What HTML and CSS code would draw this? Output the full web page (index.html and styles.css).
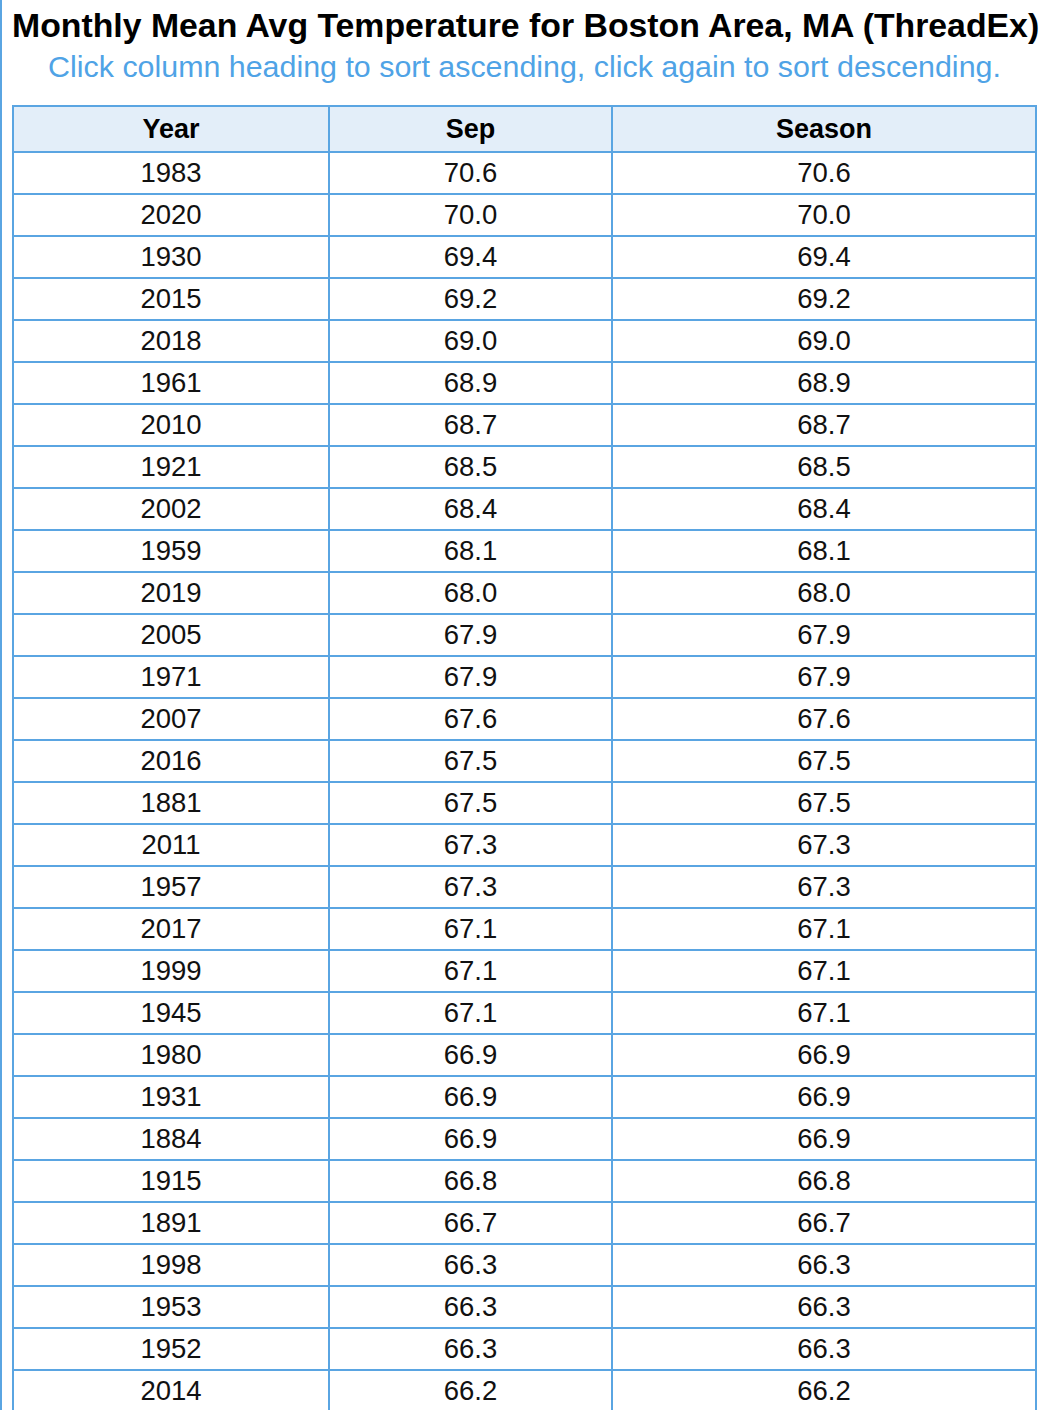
FILE: index.html
```html
<!DOCTYPE html>
<html lang="en">
<head>
<meta charset="utf-8">
<title>Monthly Mean Avg Temperature for Boston Area, MA (ThreadEx)</title>
<link rel="stylesheet" href="styles.css">
</head>
<body>
<div class="page">
  <h1 class="title">Monthly Mean Avg Temperature for Boston Area, MA (ThreadEx)</h1>
  <p class="hint">Click column heading to sort ascending, click again to sort descending.</p>
  <table class="data">
    <colgroup><col class="c1"><col class="c2"><col class="c3"></colgroup>
    <thead>
      <tr><th>Year</th><th>Sep</th><th>Season</th></tr>
    </thead>
    <tbody>
      <tr><td>1983</td><td>70.6</td><td>70.6</td></tr>
      <tr><td>2020</td><td>70.0</td><td>70.0</td></tr>
      <tr><td>1930</td><td>69.4</td><td>69.4</td></tr>
      <tr><td>2015</td><td>69.2</td><td>69.2</td></tr>
      <tr><td>2018</td><td>69.0</td><td>69.0</td></tr>
      <tr><td>1961</td><td>68.9</td><td>68.9</td></tr>
      <tr><td>2010</td><td>68.7</td><td>68.7</td></tr>
      <tr><td>1921</td><td>68.5</td><td>68.5</td></tr>
      <tr><td>2002</td><td>68.4</td><td>68.4</td></tr>
      <tr><td>1959</td><td>68.1</td><td>68.1</td></tr>
      <tr><td>2019</td><td>68.0</td><td>68.0</td></tr>
      <tr><td>2005</td><td>67.9</td><td>67.9</td></tr>
      <tr><td>1971</td><td>67.9</td><td>67.9</td></tr>
      <tr><td>2007</td><td>67.6</td><td>67.6</td></tr>
      <tr><td>2016</td><td>67.5</td><td>67.5</td></tr>
      <tr><td>1881</td><td>67.5</td><td>67.5</td></tr>
      <tr><td>2011</td><td>67.3</td><td>67.3</td></tr>
      <tr><td>1957</td><td>67.3</td><td>67.3</td></tr>
      <tr><td>2017</td><td>67.1</td><td>67.1</td></tr>
      <tr><td>1999</td><td>67.1</td><td>67.1</td></tr>
      <tr><td>1945</td><td>67.1</td><td>67.1</td></tr>
      <tr><td>1980</td><td>66.9</td><td>66.9</td></tr>
      <tr><td>1931</td><td>66.9</td><td>66.9</td></tr>
      <tr><td>1884</td><td>66.9</td><td>66.9</td></tr>
      <tr><td>1915</td><td>66.8</td><td>66.8</td></tr>
      <tr><td>1891</td><td>66.7</td><td>66.7</td></tr>
      <tr><td>1998</td><td>66.3</td><td>66.3</td></tr>
      <tr><td>1953</td><td>66.3</td><td>66.3</td></tr>
      <tr><td>1952</td><td>66.3</td><td>66.3</td></tr>
      <tr><td>2014</td><td>66.2</td><td>66.2</td></tr>
    </tbody>
  </table>
</div>
</body>
</html>
```

FILE: styles.css
```css
html, body {
  margin: 0;
  padding: 0;
  background: #ffffff;
}

body {
  font-family: "Liberation Sans", Arial, sans-serif;
  color: #000000;
  border-left: 2px solid #5aa5e2;
  min-height: 1410px;
  box-sizing: border-box;
}

.page {
  width: 1025px;
  margin-left: 10px;
  padding-top: 5px;
}

.title {
  margin: 0;
  font-size: 33.8px;
  font-weight: bold;
  line-height: 40px;
  text-align: center;
  white-space: nowrap;
}

.hint {
  margin: 0;
  font-size: 30.4px;
  line-height: 43px;
  color: #4fa3e6;
  text-align: center;
  white-space: nowrap;
}

.data {
  margin-top: 17px;
  width: 1025px;
  table-layout: fixed;
  border-collapse: separate;
  border-spacing: 0;
  border-top: 2px solid #5aa5e2;
  border-left: 2px solid #5aa5e2;
  font-size: 27.5px;
}

.c1 { width: 316px; }
.c2 { width: 283px; }
.c3 { width: 424px; }

.data th,
.data td {
  border-right: 2px solid #5aa5e2;
  border-bottom: 2px solid #5aa5e2;
  text-align: center;
  padding: 0;
  box-sizing: border-box;
}

.data th {
  background: #e3eef9;
  font-weight: bold;
  height: 46px;
  font-size: 27px;
}

.data td {
  height: 42px;
  color: #111111;
}
```
